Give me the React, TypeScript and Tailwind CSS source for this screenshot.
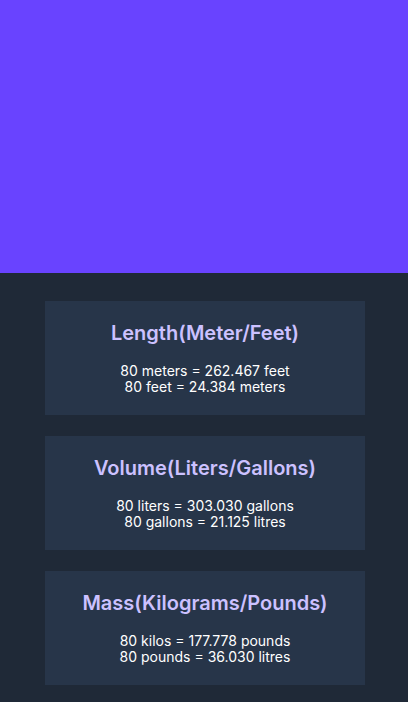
import React from 'react';

const conversions = [
  {
    title: 'Length(Meter/Feet)',
    lines: ['80 meters = 262.467 feet', '80 feet = 24.384 meters'],
  },
  {
    title: 'Volume(Liters/Gallons)',
    lines: ['80 liters = 303.030 gallons', '80 gallons = 21.125 litres'],
  },
  {
    title: 'Mass(Kilograms/Pounds)',
    lines: ['80 kilos = 177.778 pounds', '80 pounds = 36.030 litres'],
  },
];

const App = () => {
  return (
    <div className="min-h-[702px] bg-[#1f2937] font-['Inter',sans-serif]">
      <div className="h-[273px] bg-[#6943ff]" />
      <div className="flex flex-col items-center gap-[21px] pt-[28px] pb-[18px] pl-[2px]">
        {conversions.map((c) => (
          <div key={c.title} className="w-[320px] bg-[#273549] pt-[18px] pb-[20px] text-center">
            <h2 className="text-[20px] leading-7 font-semibold text-[#ccc1ff]">{c.title}</h2>
            <div className="mt-4 text-[14px] leading-4 text-white">
              {c.lines.map((l) => (
                <p key={l}>{l}</p>
              ))}
            </div>
          </div>
        ))}
      </div>
    </div>
  );
};

export default App;
